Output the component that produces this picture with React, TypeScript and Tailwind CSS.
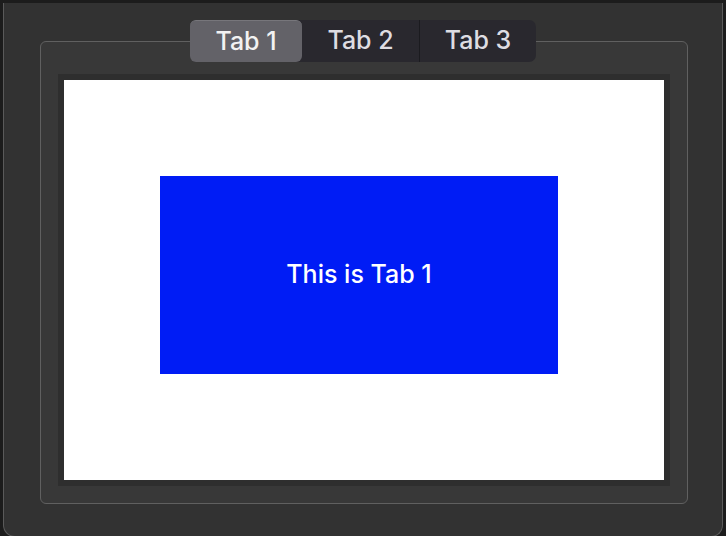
const tabs = ['Tab 1', 'Tab 2', 'Tab 3'];

export default function App() {
  const active = 0;
  return (
    <div
      className="w-[726px] h-[536px] bg-[#1c1c1c] pt-[3px] pl-[3px] pr-[3px] flex overflow-hidden"
      style={{ fontFamily: 'Inter, "Noto Sans", sans-serif' }}
    >
      <div className="flex-1 h-[534px] bg-[#323232] border border-t-0 border-[#5a5a5a] rounded-b-[12px] pl-[36px] pt-[38px]">
        <div className="relative w-[648px] h-[463px] border border-[#606060] rounded-[6px] bg-[#383838] pl-[17px] pt-[32px]">
          <div className="absolute -top-[22px] left-[149px] flex h-[42px] rounded-[7px] bg-[#29282e] text-[25px] font-medium">
            {tabs.map((t, i) => (
              <div
                key={t}
                className={
                  i === active
                    ? 'w-[112px] flex items-center justify-center rounded-[6px] bg-[#636268] text-[#f2f2f2] border-t border-[#77767b]'
                    : i === 1
                    ? 'w-[118px] flex items-center justify-center text-[#dedde2] border-r border-[#1b1b1f]'
                    : 'w-[116px] flex items-center justify-center text-[#dedde2]'
                }
              >
                {t}
              </div>
            ))}
          </div>
          <div className="w-[612px] h-[412px] bg-[#2e2e2e] p-[6px]">
            <div className="w-[600px] h-[400px] bg-white pl-[96px] pt-[96px]">
              <div className="w-[398px] h-[198px] bg-[#001cf5] flex items-center justify-center text-white text-[25px] font-medium">
                This is Tab 1
              </div>
            </div>
          </div>
        </div>
      </div>
    </div>
  );
}
